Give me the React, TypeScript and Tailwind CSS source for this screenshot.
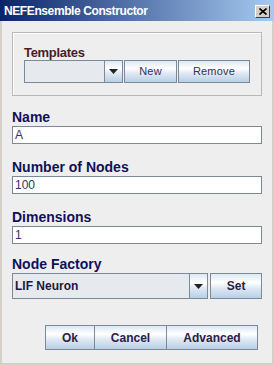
import React from "react";

const oceanBtn =
  "bg-[linear-gradient(180deg,#dde8f3_0%,#ffffff_35%,#dde8f3_60%,#b8cfe5_100%)] border border-[#7a8a99]";

const Arrow = () => (
  <svg width="9" height="5" viewBox="0 0 9 5">
    <path d="M0 0H9L4.5 5Z" fill="#222" />
  </svg>
);

const Field = ({ label, value }: { label: string; value: string }) => (
  <div className="flex flex-col">
    <div className="h-[15px] leading-[15px] text-[14px] font-bold text-[#10105a]">{label}</div>
    <div className="mt-[1px] h-[18px] bg-white border border-[#7a8a99] pl-[2px] text-[12px] leading-[16px] text-[#333366]">
      {value}
    </div>
  </div>
);

export default function App() {
  return (
    <div
      className="w-[274px] h-[365px] bg-[#eeeeee] border-x-2 border-b-2 border-[#d4d0c8] flex flex-col"
      style={{ fontFamily: '"Liberation Sans", Arial, sans-serif' }}
    >
      <div className="h-[21px] -mx-[2px] bg-[linear-gradient(90deg,#0a246a,#a6caf0)] flex items-center justify-between pl-[4px] pr-[4px]">
        <span className="text-white text-[12px] font-bold tracking-[-0.4px]">NEFEnsemble Constructor</span>
        <div className="w-[15px] h-[13px] mt-[1px] bg-[#d4d0c8] border border-t-white border-l-white border-r-[#404040] border-b-[#404040] flex items-center justify-center">
          <svg width="8" height="7" viewBox="0 0 8 7">
            <path d="M0.5 0.5L7.5 6.5M7.5 0.5L0.5 6.5" stroke="#000" strokeWidth="1.6" />
          </svg>
        </div>
      </div>

      <div className="flex flex-col px-[10px]">
        <div className="mt-[11px] h-[64px] border border-[#b8b8b8] shadow-[inset_1px_1px_0_#ffffff] pt-[13px] px-[11px]">
          <div className="h-[14px] leading-[14px] text-[13px] font-bold tracking-[-0.3px] text-[#4a1c28]">Templates</div>
          <div className="flex h-[23px] gap-[1px]">
            <div className="flex w-[99px] border border-[#7a8a99]">
              <div className="flex-1 bg-[#e6eaef]" />
              <div className={`w-[19px] -my-[1px] -mr-[1px] flex items-center justify-center ${oceanBtn}`}>
                <Arrow />
              </div>
            </div>
            <button className={`w-[53px] text-[11px] tracking-[0.2px] text-[#333355] ${oceanBtn}`}>New</button>
            <button className={`w-[72px] text-[11px] tracking-[0.2px] text-[#333355] ${oceanBtn}`}>Remove</button>
          </div>
        </div>

        <div className="mt-[14px] flex flex-col gap-[16px]">
          <Field label="Name" value="A" />
          <Field label="Number of Nodes" value="100" />
          <Field label="Dimensions" value="1" />
        </div>

        <div className="mt-[13px] h-[15px] leading-[15px] text-[14px] font-bold text-[#10105a]">Node Factory</div>
        <div className="mt-[1px] flex h-[26px] gap-[2px]">
          <div className="flex w-[197px] border border-[#7a8a99]">
            <div className="flex-1 bg-[#e6eaef] pl-[2px] text-[12px] font-bold leading-[24px] text-[#1a1a40]">LIF Neuron</div>
            <div className={`w-[19px] -my-[1px] -mr-[1px] flex items-center justify-center ${oceanBtn}`}>
              <Arrow />
            </div>
          </div>
          <button className={`w-[52px] text-[12px] font-bold text-[#2a2048] ${oceanBtn}`}>Set</button>
        </div>

        <div className="mt-[26px] flex h-[25px] pl-[33px]">
          <button className={`w-[50px] text-[12px] font-bold text-[#2a2048] ${oceanBtn}`}>Ok</button>
          <button className={`w-[73px] -ml-[1px] text-[12px] font-bold text-[#2a2048] ${oceanBtn}`}>Cancel</button>
          <button className={`w-[92px] -ml-[1px] text-[12px] font-bold text-[#2a2048] ${oceanBtn}`}>Advanced</button>
        </div>
      </div>
    </div>
  );
}
